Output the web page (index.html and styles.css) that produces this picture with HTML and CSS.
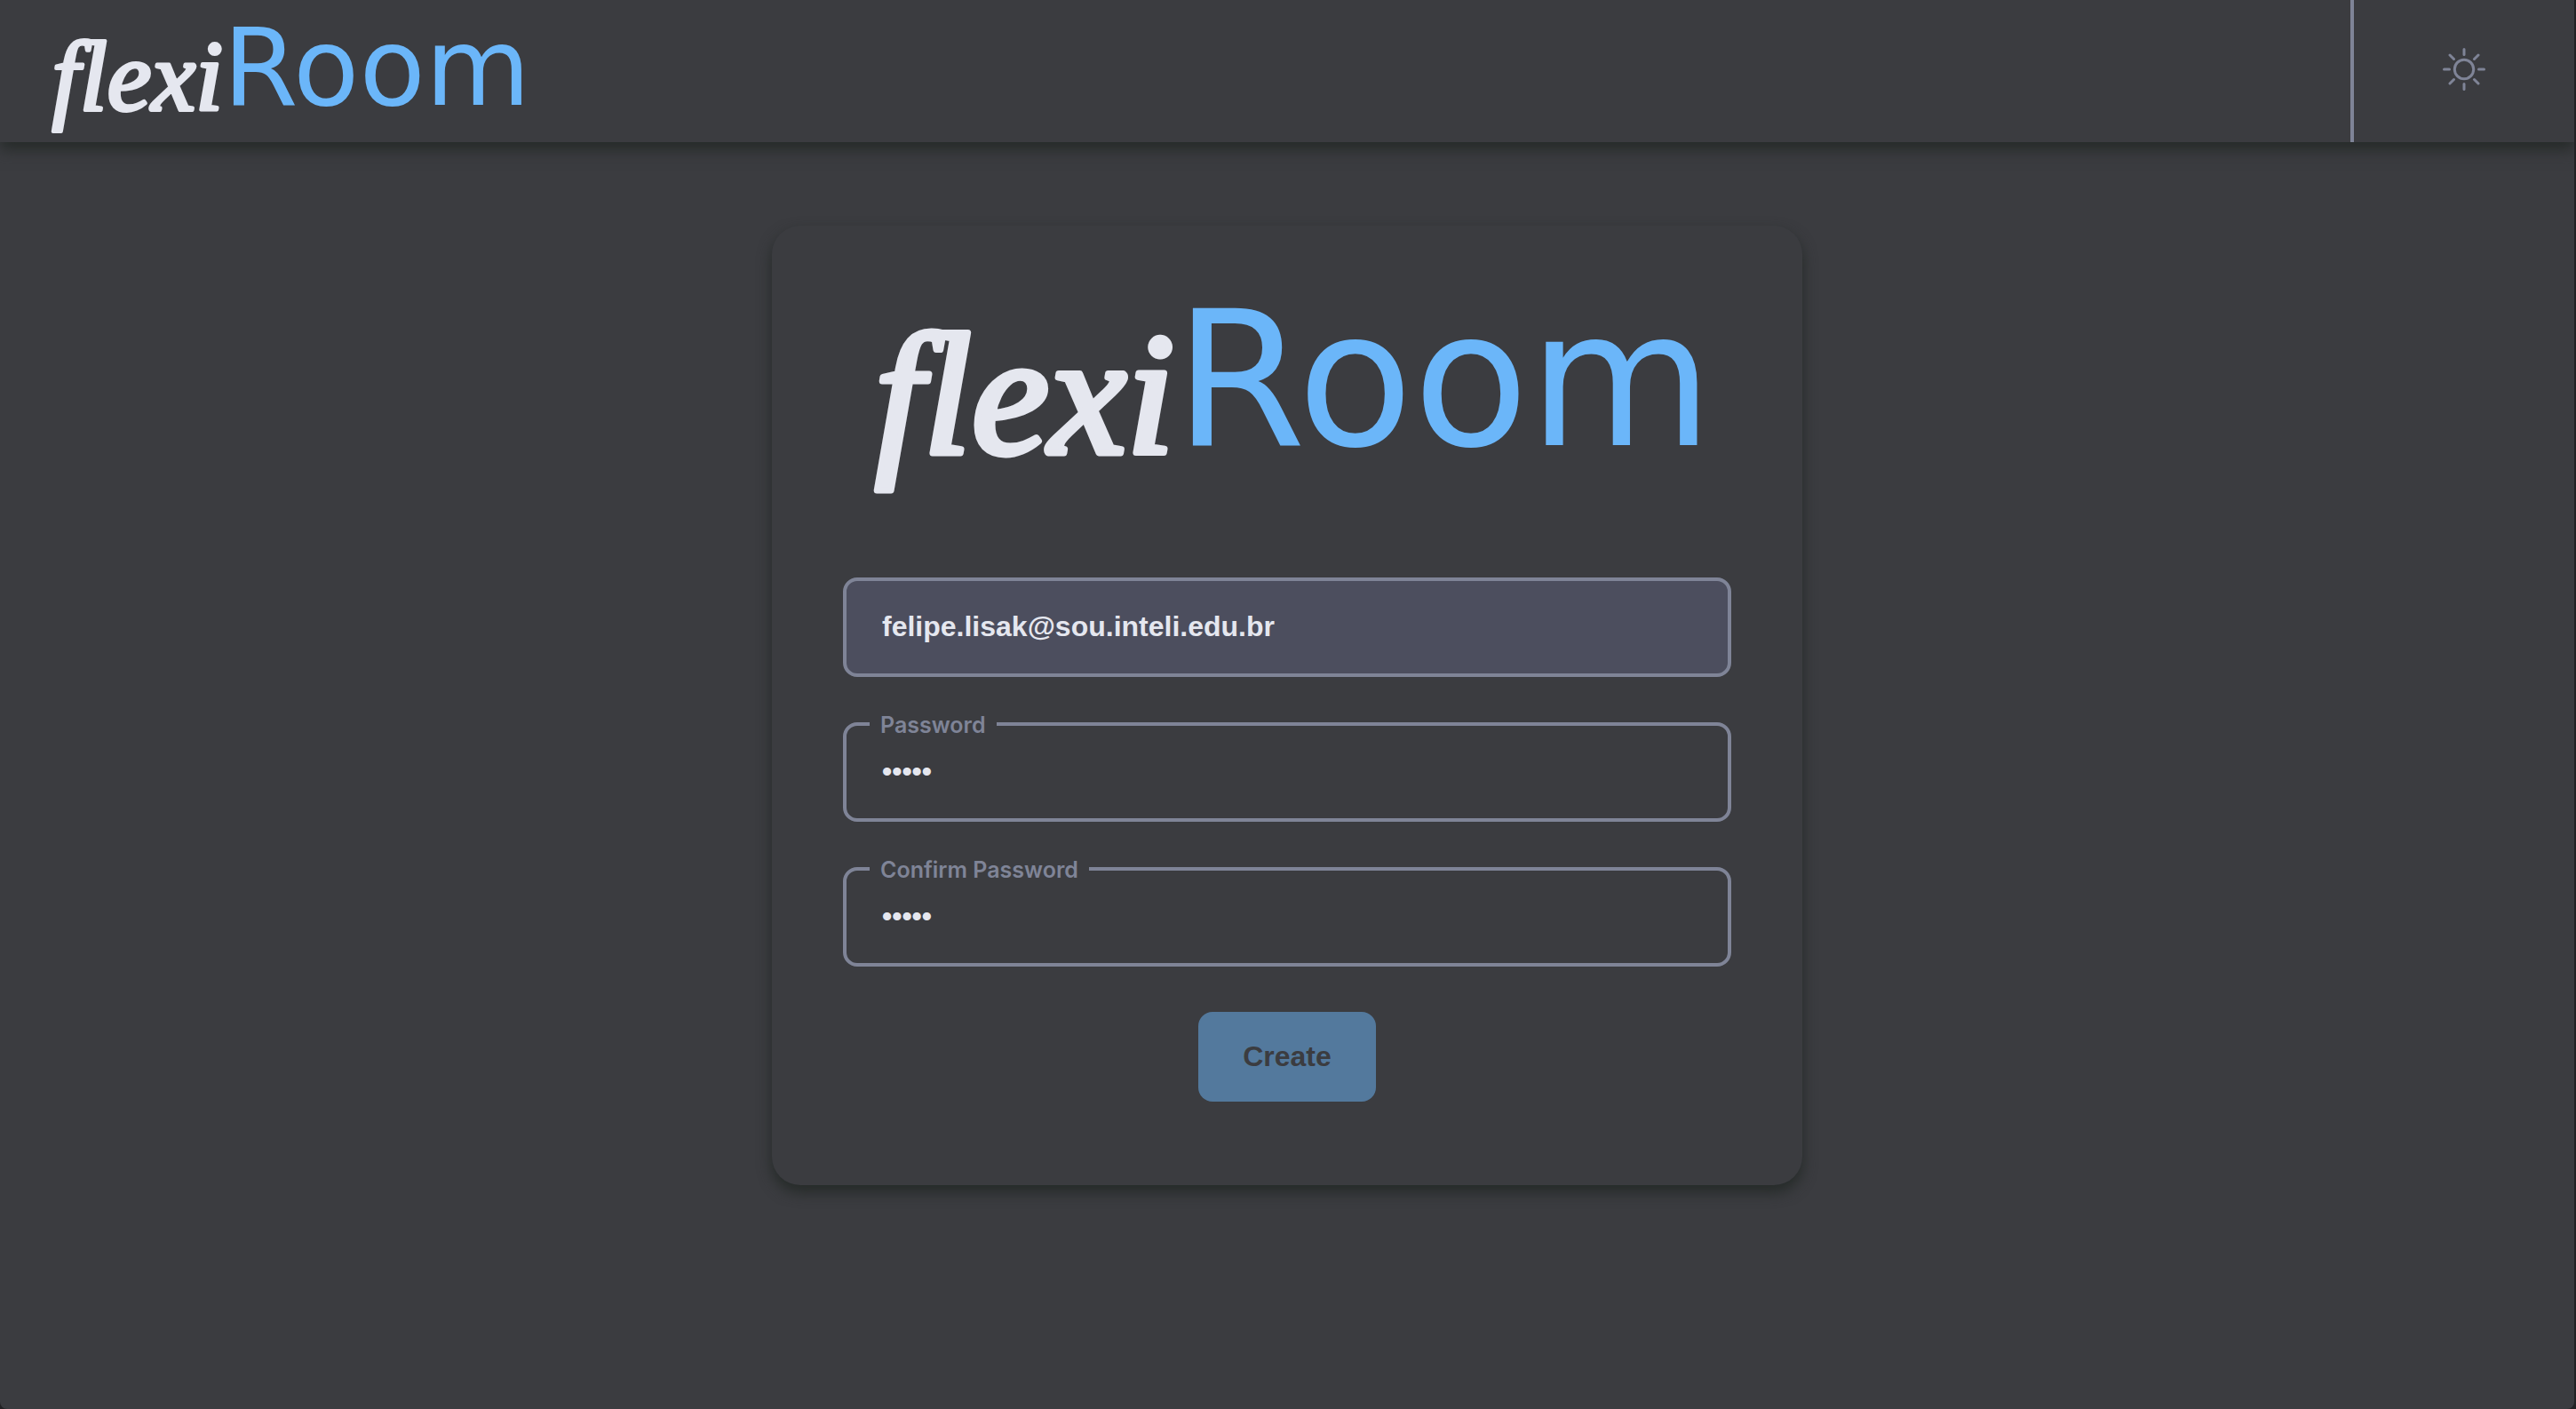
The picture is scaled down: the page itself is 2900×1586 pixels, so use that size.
FILE: index.html
```html
<!DOCTYPE html>
<html lang="en">
<head>
  <meta charset="utf-8">
  <meta name="viewport" content="width=device-width, initial-scale=1">
  <title>flexiRoom</title>
  <link rel="stylesheet" href="styles.css">
</head>
<body>
  <header class="topbar">
    <a class="topbar-brand" href="#" aria-label="flexiRoom">
      <svg class="logo" viewBox="0 0 1000 222">
        <text class="logo-flexi" x="36" y="162">flexi</text>
        <text class="logo-room" x="373" y="153">Room</text>
      </svg>
    </a>
    <button class="theme-toggle" type="button" aria-label="Toggle theme">
      <svg class="theme-icon" viewBox="0 0 48 48">
        <circle cx="24" cy="24" r="10.7"/>
        <path d="M24 1.500V7.500M24 40.500V46.500M1.500 24H7.500M40.500 24H46.500M8 8L12.500 12.500M35.500 35.500L40 40M40 8L35.500 12.500M12.500 35.500L8 40"/>
      </svg>
    </button>
  </header>

  <main class="content">
    <form class="card">
      <svg class="logo" viewBox="0 0 1000 222">
        <text class="logo-flexi" x="36" y="162">flexi</text>
        <text class="logo-room" x="373" y="153">Room</text>
      </svg>
      <input class="input input-filled" type="email" value="felipe.lisak@sou.inteli.edu.br" aria-label="Email" readonly>
      <div class="field">
        <label class="field-label" for="password">Password</label>
        <input class="input" id="password" type="password" value="12345">
      </div>
      <div class="field">
        <label class="field-label" for="confirm">Confirm Password</label>
        <input class="input" id="confirm" type="password" value="12345">
      </div>
      <button class="submit" type="submit">Create</button>
    </form>
  </main>
</body>
</html>
```
FILE: styles.css
```css
:root {
  --surface: #3b3c40;
  --line: #7f8497;
  --text: #e5e7ef;
  --accent: #6bb6f9;
}

* {
  box-sizing: border-box;
}

html {
  background: #222224;
}

body {
  display: flex;
  flex-direction: column;
  min-height: 100vh;
  margin: 0 2px 0 0;
  background: var(--surface);
  border-radius: 0 0 8px 8px;
  color: var(--text);
  font-family: Inter, "Noto Sans", sans-serif;
}

.topbar {
  display: flex;
  justify-content: space-between;
  height: 160px;
  background: var(--surface);
  box-shadow: 0 8px 16px #252a28;
}

.topbar-brand {
  width: 571px;
  margin: 31px 0 0 38px;
}

.logo {
  display: block;
  width: 100%;
  overflow: visible;
}

.logo-flexi {
  fill: var(--text);
  stroke: var(--text);
  stroke-width: 7;
  stroke-linejoin: round;
  font: italic 400 196px "Liberation Serif", "Times New Roman", serif;
}

.logo-room {
  fill: var(--accent);
  font: 400 213px "DejaVu Sans", sans-serif;
}

.theme-toggle {
  display: flex;
  align-items: center;
  justify-content: center;
  width: 252px;
  padding: 0 0 4px;
  border: 0;
  border-left: 4px solid var(--line);
  background: none;
}

.theme-icon {
  width: 48px;
  height: 48px;
  fill: none;
  stroke: var(--line);
  stroke-width: 3;
  stroke-linecap: round;
}

.content {
  display: flex;
  justify-content: center;
  padding: 94px 24px;
}

.card {
  display: flex;
  flex-direction: column;
  align-items: center;
  gap: 51px;
  width: 1160px;
  padding: 94px 80px;
  border-radius: 32px;
  background: var(--surface);
  box-shadow: 0 8px 16px #252a28;
}

.card .logo {
  margin-bottom: 29px;
}

.field {
  position: relative;
  width: 100%;
}

.field-label {
  position: absolute;
  top: -14px;
  left: 30px;
  padding: 0 12px;
  background: var(--surface);
  color: var(--line);
  font-size: 25px;
  font-weight: 600;
  line-height: 34px;
}

.input {
  display: block;
  width: 100%;
  height: 112px;
  padding: 0 40px 2px;
  border: 4px solid var(--line);
  border-radius: 16px;
  outline: 0;
  background: transparent;
  color: var(--text);
  font: 700 32px "Liberation Sans", Arial, sans-serif;
}

.input-filled {
  background: #4c4e5e;
}

.submit {
  width: 200px;
  height: 101px;
  border: 0;
  border-radius: 16px;
  background: #53799d;
  color: var(--surface);
  font: 700 32px "Liberation Sans", Arial, sans-serif;
}
```
